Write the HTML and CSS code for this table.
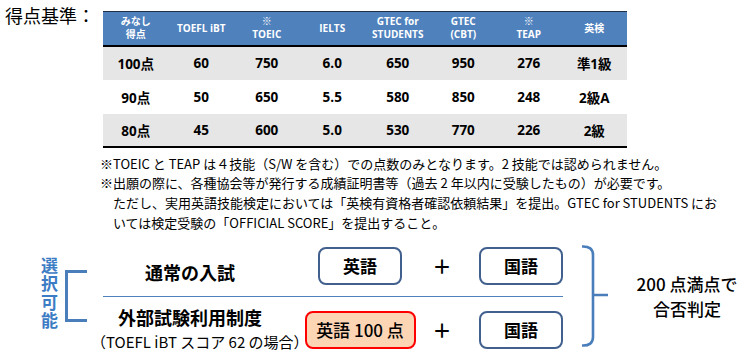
FILE: index.html
```html
<!DOCTYPE html>
<html lang="ja">
<head>
<meta charset="utf-8">
<link rel="stylesheet" href="styles.css">
</head>
<body>
<div class="top">
  <div class="title">得点基準：</div>
  <table class="scores">
    <thead>
      <tr>
        <th>みなし<br>得点</th>
        <th>TOEFL iBT</th>
        <th>※<br>TOEIC</th>
        <th>IELTS</th>
        <th>GTEC for<br>STUDENTS</th>
        <th>GTEC<br>(CBT)</th>
        <th>※<br>TEAP</th>
        <th>英検</th>
      </tr>
    </thead>
    <tbody>
      <tr class="shade"><td>100点</td><td>60</td><td>750</td><td>6.0</td><td>650</td><td>950</td><td>276</td><td>準1級</td></tr>
      <tr><td>90点</td><td>50</td><td>650</td><td>5.5</td><td>580</td><td>850</td><td>248</td><td>2級A</td></tr>
      <tr class="shade"><td>80点</td><td>45</td><td>600</td><td>5.0</td><td>530</td><td>770</td><td>226</td><td>2級</td></tr>
    </tbody>
  </table>
</div>
<div class="notes">
  <div class="line">※TOEIC と TEAP は４技能（S/W を含む）での点数のみとなります。2 技能では認められません。</div>
  <div class="line">※出願の際に、各種協会等が発行する成績証明書等（過去 2 年以内に受験したもの）が必要です。</div>
  <div class="line indent">ただし、実用英語技能検定においては「英検有資格者確認依頼結果」を提出。GTEC for STUDENTS にお</div>
  <div class="line indent">いては検定受験の「OFFICIAL SCORE」を提出すること。</div>
</div>
<div class="diagram">
  <div class="vlabel">選択可能</div>
  <div class="bracket"></div>
  <div class="rows">
    <div class="row">
      <div class="label first">通常の入試</div>
      <div class="cell"><div class="box">英語</div></div>
      <div class="plus">＋</div>
      <div class="cell end"><div class="box">国語</div></div>
    </div>
    <div class="divider"></div>
    <div class="row">
      <div class="label second">
        <div class="main">外部試験利用制度</div>
        <div class="sub">（TOEFL iBT スコア 62 の場合）</div>
      </div>
      <div class="cell"><div class="box hot">英語 100 点</div></div>
      <div class="plus">＋</div>
      <div class="cell end"><div class="box">国語</div></div>
    </div>
  </div>
  <svg class="brace" width="28" height="102" viewBox="0 0 28 102">
    <path d="M0 1.5 Q11 1 11 10 V50 H26 M11 50 V92 Q11 101 0 100.5" fill="none" stroke="#4a7ebb" stroke-width="2.6"/>
  </svg>
  <div class="result">200 点満点で<br>合否判定</div>
</div>
</body>
</html>
```
FILE: styles.css
```css
* { box-sizing: border-box; }
body {
  margin: 0;
  background: #fff;
  font-family: "Noto Sans CJK JP", sans-serif;
  color: #000;
  width: 745px;
  height: 355px;
  overflow: hidden;
}
.top {
  display: flex;
  align-items: flex-start;
  padding: 6px 0 0 5px;
}
.title {
  width: 98px;
  font-size: 18px;
  line-height: 19px;
}
.scores {
  margin-top: 5px;
  width: 524px;
  border-collapse: collapse;
  table-layout: fixed;
  font-family: "Open Sans", "Noto Sans CJK JP", sans-serif;
}
.scores th {
  background: #4f81bd;
  color: #fff;
  font-size: 10px;
  font-weight: 700;
  line-height: 13px;
  height: 34px;
  padding: 0;
  text-align: center;
  border-top: 1px solid #1f2f45;
  border-bottom: 2px solid #000;
}
.scores td {
  font-size: 13.5px;
  font-weight: 700;
  text-align: center;
  height: 34px;
  padding: 0;
}
.scores tr.shade td { background: #e6e6e6; }
.scores tbody tr:last-child td { border-bottom: 2px solid #000; height: 33px; }
.notes {
  margin-top: 6px;
  padding-left: 100px;
  font-size: 13px;
  line-height: 19.7px;
  white-space: nowrap;
}
.notes .indent { padding-left: 13px; }
.diagram {
  display: flex;
  align-items: center;
  margin-top: 13px;
  padding-left: 40px;
}
.vlabel {
  writing-mode: vertical-rl;
  text-orientation: upright;
  width: 18px;
  font-size: 17px;
  line-height: 18px;
  letter-spacing: 1.3px;
  font-weight: 700;
  color: #3c7cc4;
  margin-top: -6px;
}
.bracket {
  margin-left: 7px;
  width: 22px;
  height: 52px;
  border: 3px solid #4a7ebb;
  border-right: none;
}
.rows {
  width: 476px;
  display: flex;
  flex-direction: column;
}
.row {
  display: grid;
  grid-template-columns: 206px 134px 30px 106px;
  align-items: center;
  height: 38px;
}
.label {
  text-align: center;
  font-weight: 700;
  font-size: 18px;
  white-space: nowrap;
}
.label.first { margin-top: 12px; }
.label.second { align-self: start; margin-top: -2px; }
.label .main { line-height: 22px; }
.label .sub { font-size: 15px; font-weight: 400; line-height: 21px; margin-top: 3px; margin-left: 4px; }
.cell {
  display: flex;
  justify-content: center;
}
.cell.end { justify-content: flex-end; }
.box {
  height: 38px;
  width: 84px;
  border: 2px solid #41608e;
  border-radius: 8px;
  display: flex;
  align-items: center;
  justify-content: center;
  font-size: 17px;
  font-weight: 700;
}
.box.hot {
  width: 111px;
  border-color: #ff0000;
  background: #fcd5b5;
  font-weight: 500;
}
.plus {
  text-align: center;
  font-size: 19px;
  font-weight: 700;
}
.divider {
  margin: 11px 0 11px 16px;
  border-top: 1.5px solid #4f81bd;
}
.brace {
  margin-left: 19px;
  display: block;
}
.result {
  margin-left: 22px;
  width: 110px;
  text-align: center;
  font-size: 17px;
  font-weight: 500;
  line-height: 25px;
}
```
